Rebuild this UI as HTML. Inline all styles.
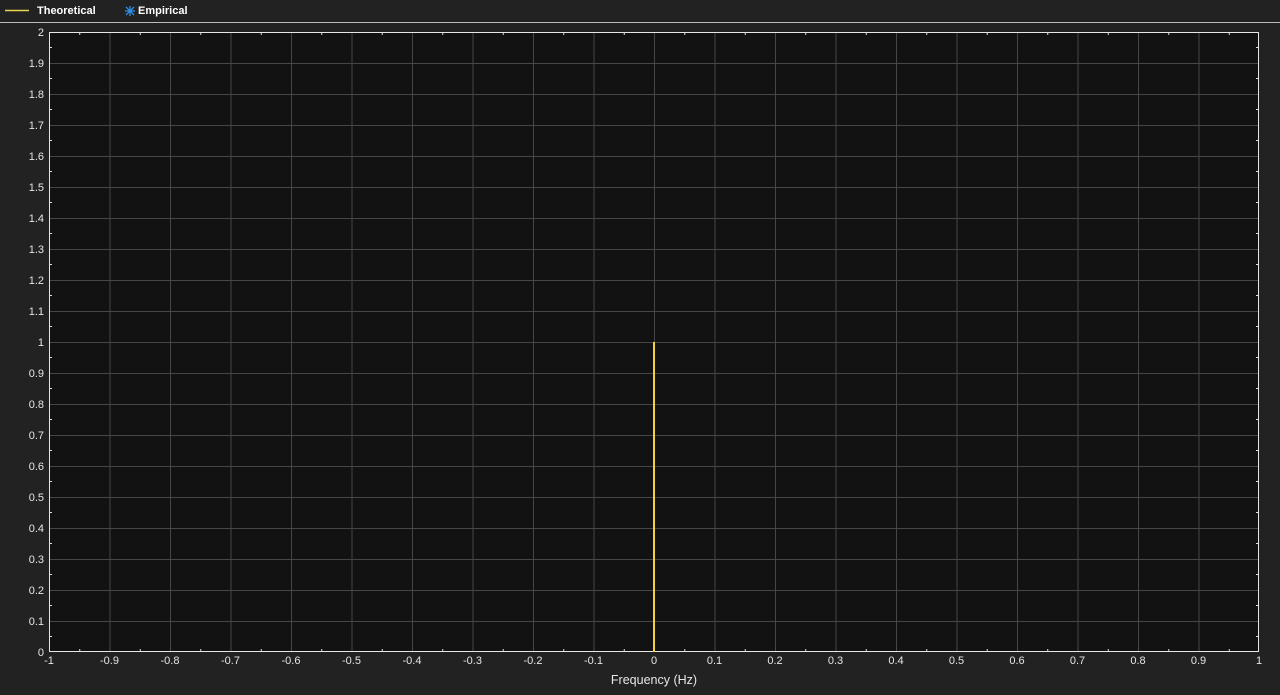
<!DOCTYPE html>
<html><head><meta charset="utf-8"><style>
html,body{margin:0;padding:0;background:#222;width:1280px;height:695px;overflow:hidden;font-family:"Liberation Sans",Arial,sans-serif}
</style></head><body>
<svg width="1280" height="695" xmlns="http://www.w3.org/2000/svg" style="display:block">
<defs>
<pattern id="g" x="49" y="32" width="60.5" height="31" patternUnits="userSpaceOnUse">
<line x1="0.5" y1="0" x2="0.5" y2="31" stroke="#464646" stroke-width="1"/>
<line x1="0" y1="0.5" x2="60.5" y2="0.5" stroke="#464646" stroke-width="1"/>
</pattern>
<pattern id="mx" x="49" y="0" width="60.5" height="10" patternUnits="userSpaceOnUse">
<line x1="30.75" y1="0" x2="30.75" y2="10" stroke="#ddd" stroke-width="1"/>
</pattern>
<pattern id="my" x="0" y="32" width="10" height="31" patternUnits="userSpaceOnUse">
<line x1="0" y1="15.5" x2="10" y2="15.5" stroke="#ddd" stroke-width="1"/>
</pattern>
</defs>
<line x1="0" y1="22.5" x2="1280" y2="22.5" stroke="#bbb" stroke-width="1"/>
<line x1="5" y1="10.5" x2="29" y2="10.5" stroke="#e8d44d" stroke-width="1.5"/>
<text x="37" y="14" fill="#fff" font-size="11" font-weight="bold">Theoretical</text>
<g stroke="#2f8fe8" stroke-width="1.3"><line x1="126" y1="7" x2="134" y2="15"/><line x1="134" y1="7" x2="126" y2="15"/><line x1="130" y1="6" x2="130" y2="16"/><line x1="125" y1="11" x2="135" y2="11"/></g>
<text x="138" y="14" fill="#fff" font-size="11" font-weight="bold">Empirical</text>
<rect x="49" y="32" width="1210" height="620" fill="#121212"/>
<rect x="49" y="32" width="1210" height="620" fill="url(#g)"/>
<rect x="49" y="649" width="1210" height="3" fill="url(#mx)"/>
<rect x="49" y="32" width="1210" height="3" fill="url(#mx)"/>
<rect x="49" y="32" width="3" height="620" fill="url(#my)"/>
<rect x="1256" y="32" width="3" height="620" fill="url(#my)"/>
<rect x="49.5" y="32.5" width="1209" height="619" fill="none" stroke="#e6e6e6" stroke-width="1"/>
<line x1="654" y1="342" x2="654" y2="652" stroke="#f5d336" stroke-width="2"/>
<g fill="#e6e6e6" font-size="11" text-anchor="middle">
<text x="49" y="664">-1</text><text x="109.5" y="664">-0.9</text><text x="170" y="664">-0.8</text><text x="230.5" y="664">-0.7</text><text x="291" y="664">-0.6</text><text x="351.5" y="664">-0.5</text><text x="412" y="664">-0.4</text><text x="472.5" y="664">-0.3</text><text x="533" y="664">-0.2</text><text x="593.5" y="664">-0.1</text><text x="654" y="664">0</text><text x="714.5" y="664">0.1</text><text x="775" y="664">0.2</text><text x="835.5" y="664">0.3</text><text x="896" y="664">0.4</text><text x="956.5" y="664">0.5</text><text x="1017" y="664">0.6</text><text x="1077.5" y="664">0.7</text><text x="1138" y="664">0.8</text><text x="1198.5" y="664">0.9</text><text x="1259" y="664">1</text>
<text x="654" y="684" font-size="12.5">Frequency (Hz)</text>
</g>
<g fill="#e6e6e6" font-size="11" text-anchor="end">
<text x="44" y="656">0</text><text x="44" y="625">0.1</text><text x="44" y="594">0.2</text><text x="44" y="563">0.3</text><text x="44" y="532">0.4</text><text x="44" y="501">0.5</text><text x="44" y="470">0.6</text><text x="44" y="439">0.7</text><text x="44" y="408">0.8</text><text x="44" y="377">0.9</text><text x="44" y="346">1</text><text x="44" y="315">1.1</text><text x="44" y="284">1.2</text><text x="44" y="253">1.3</text><text x="44" y="222">1.4</text><text x="44" y="191">1.5</text><text x="44" y="160">1.6</text><text x="44" y="129">1.7</text><text x="44" y="98">1.8</text><text x="44" y="67">1.9</text><text x="44" y="36">2</text>
</g>
</svg>
</body></html>
